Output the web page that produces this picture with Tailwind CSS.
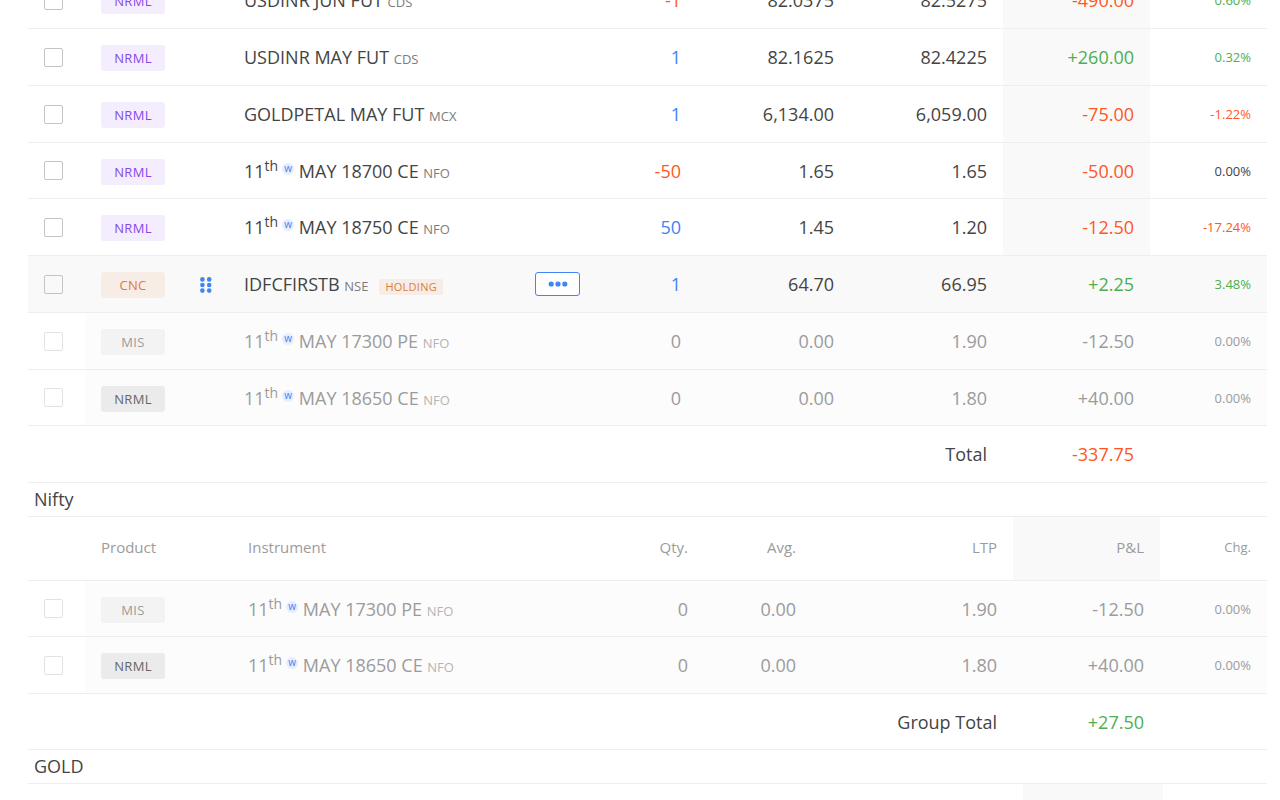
<!DOCTYPE html>
<html lang="en">
<head>
<meta charset="utf-8">
<meta name="viewport" content="width=device-width, initial-scale=1">
<title>Positions</title>
<script src="https://cdn.jsdelivr.net/npm/@tailwindcss/browser@4"></script>
</head>
<body class="bg-white font-['Open_Sans','Noto_Sans',sans-serif] text-lg leading-6 text-[#444]">
<main class="h-screen overflow-hidden pl-7 pr-[13px]">
  <table class="-mt-7 w-full table-fixed border-separate border-spacing-0" aria-label="All positions">
    <colgroup>
      <col class="w-[57px]"><col class="w-[143px]"><col><col class="w-[101px]"><col class="w-[153px]"><col class="w-[153px]"><col class="w-[147px]"><col class="w-[117px]">
    </colgroup>
    <tbody id="all"></tbody>
  </table>

  <h2 class="h-[34px] border-b border-[#eee] px-1.5 leading-[33px]">Nifty</h2>
  <table class="w-full table-fixed border-separate border-spacing-0" aria-label="Nifty">
    <colgroup>
      <col class="w-[57px]"><col class="w-[147px]"><col><col class="w-[101px]"><col class="w-[108px]"><col class="w-[201px]"><col class="w-[147px]"><col class="w-[107px]">
    </colgroup>
    <thead>
      <tr class="h-16 text-[15px] text-[#9b9b9b] *:border-b *:border-[#eee] *:pb-1 *:font-normal">
        <td></td>
        <th class="px-4 text-left">Product</th>
        <th class="px-4 text-left">Instrument</th>
        <th class="px-4 text-right">Qty.</th>
        <th class="px-4 text-right">Avg.</th>
        <th class="px-4 text-right">LTP</th>
        <th class="bg-[#f9f9f9] px-4 text-right">P&amp;L</th>
        <th class="px-4 text-right text-[13px]">Chg.</th>
      </tr>
    </thead>
    <tbody id="nifty"></tbody>
  </table>

  <h2 class="h-[34px] border-b border-[#eee] px-1.5 leading-[33px]">GOLD</h2>
  <table class="w-full table-fixed border-separate border-spacing-0" aria-label="GOLD">
    <colgroup><col><col class="w-[140px]"><col class="w-[104px]"></colgroup>
    <thead><tr class="h-16"><td></td><td class="bg-[#f9f9f9]"></td><td></td></tr></thead>
  </table>
</main>

<script>
const badge = {
  purple: 'bg-[#f3edfd] text-[#8549ea]',
  orange: 'bg-[#f7ede6] text-[#da7d3c]',
  light: 'bg-[#f3f3f3] text-[#9b9b9b]',
  gray: 'bg-[#ebebeb] text-[#666]'
};
const tone = v => v.startsWith('-') ? 'text-[#ff5722]' : v === '0.00%' ? '' : 'text-[#4caf50]';
const weekly = '11<sup class="text-[14px] leading-none">th</sup><span class="mb-2 ml-1 inline-block size-3 rounded-full bg-[#e6eefe] text-center align-middle text-[10px] leading-[10px] text-[#4184f3]">w</span> ';
const drag = `<button type="button" aria-label="Move"><svg class="block" width="12" height="16" fill="#4184f3"><circle cx="2.4" cy="2.4" r="2.3"/><circle cx="9.2" cy="2.4" r="2.3"/><circle cx="2.4" cy="8" r="2.3"/><circle cx="9.2" cy="8" r="2.3"/><circle cx="2.4" cy="13.6" r="2.3"/><circle cx="9.2" cy="13.6" r="2.3"/></svg></button>`;
const menu = `<button type="button" aria-label="Options" class="flex h-6 w-[45px] items-center justify-center rounded-[3px] border border-[#4184f3] bg-white"><svg width="20" height="6" fill="#4184f3"><circle cx="3.2" cy="3" r="2.6"/><circle cx="10" cy="3" r="2.6"/><circle cx="16.8" cy="3" r="2.6"/></svg></button>`;

function row(r) {
  const closed = r.state === 'closed', hover = r.state === 'hover';
  const bg = closed ? 'bg-[#fcfcfc]' : hover ? 'bg-[#f9f9f9]' : '';
  const qtyTone = closed ? '' : r.qty.startsWith('-') ? 'text-[#ff5722]' : 'text-[#4184f3]';
  const name = (r.weekly ? weekly : '') + r.name;
  return `<tr class="${r.short ? 'h-14' : 'h-[57px]'} ${closed ? 'text-[#9b9b9b]' : ''} *:border-b *:border-[#eee]">
    <td class="pl-4 ${hover ? 'bg-[#f9f9f9]' : ''}"><input type="checkbox" aria-label="Select ${r.name}" class="block size-[19px] appearance-none rounded-[2px] border ${closed ? 'border-[#e2e2e2]' : 'border-[#c4c4c4]'} checked:bg-[#4184f3]"></td>
    <td class="px-4 ${bg}"><div class="flex items-center justify-between pt-0.5"><span class="w-16 rounded-[3px] text-center text-[13px] leading-[26px] tracking-wide ${badge[r.color]}">${r.product}</span>${hover ? drag : ''}</div></td>
    <td class="px-4 ${bg}"><div class="flex h-6 items-center justify-between"><span class="h-6 whitespace-nowrap">${name} <span class="text-[13px] ${closed ? 'text-[#b4b4b4]' : 'text-[#7c7c7c]'}">${r.exch}</span>${hover ? '<span class="ml-[11px] inline-block rounded-[2px] bg-[#f7ede6] px-1.5 text-[11px] leading-4 tracking-wide text-[#da7d3c]">HOLDING</span>' : ''}</span>${hover ? menu : ''}</div></td>
    <td class="px-4 text-right ${bg} ${qtyTone}">${r.qty}</td>
    <td class="px-4 text-right ${bg}">${r.avg}</td>
    <td class="px-4 text-right ${bg}">${r.ltp}</td>
    <td class="px-4 text-right ${bg || 'bg-[#f9f9f9]'} ${closed ? '' : tone(r.pnl)}">${r.pnl}</td>
    <td class="px-4 text-right text-[13px] ${bg} ${closed ? '' : tone(r.chg)}">${r.chg}</td>
  </tr>`;
}
const total = (label, value, height) => `<tr class="${height} *:border-b *:border-[#eee]"><td colspan="6" class="px-4 text-right">${label}</td><td class="px-4 text-right ${tone(value)}">${value}</td><td></td></tr>`;

const nrml = { product: 'NRML', color: 'purple' };
const mis = { product: 'MIS', color: 'light', weekly: true, state: 'closed', name: 'MAY 17300 PE', exch: 'NFO', qty: '0', avg: '0.00', ltp: '1.90', pnl: '-12.50', chg: '0.00%' };
const ce = { product: 'NRML', color: 'gray', weekly: true, state: 'closed', name: 'MAY 18650 CE', exch: 'NFO', qty: '0', avg: '0.00', ltp: '1.80', pnl: '+40.00', chg: '0.00%' };

document.getElementById('all').innerHTML = [
  { ...nrml, name: 'USDINR JUN FUT', exch: 'CDS', qty: '-1', avg: '82.0375', ltp: '82.5275', pnl: '-490.00', chg: '0.60%' },
  { ...nrml, name: 'USDINR MAY FUT', exch: 'CDS', qty: '1', avg: '82.1625', ltp: '82.4225', pnl: '+260.00', chg: '0.32%' },
  { ...nrml, name: 'GOLDPETAL MAY FUT', exch: 'MCX', qty: '1', avg: '6,134.00', ltp: '6,059.00', pnl: '-75.00', chg: '-1.22%' },
  { ...nrml, weekly: true, short: true, name: 'MAY 18700 CE', exch: 'NFO', qty: '-50', avg: '1.65', ltp: '1.65', pnl: '-50.00', chg: '0.00%' },
  { ...nrml, weekly: true, name: 'MAY 18750 CE', exch: 'NFO', qty: '50', avg: '1.45', ltp: '1.20', pnl: '-12.50', chg: '-17.24%' },
  { product: 'CNC', color: 'orange', state: 'hover', name: 'IDFCFIRSTB', exch: 'NSE', qty: '1', avg: '64.70', ltp: '66.95', pnl: '+2.25', chg: '3.48%' },
  mis,
  { ...ce, short: true }
].map(row).join('') + total('Total', '-337.75', 'h-[57px]');

document.getElementById('nifty').innerHTML = [{ ...mis, short: true }, ce].map(row).join('') + total('Group Total', '+27.50', 'h-14');
</script>
</body>
</html>
